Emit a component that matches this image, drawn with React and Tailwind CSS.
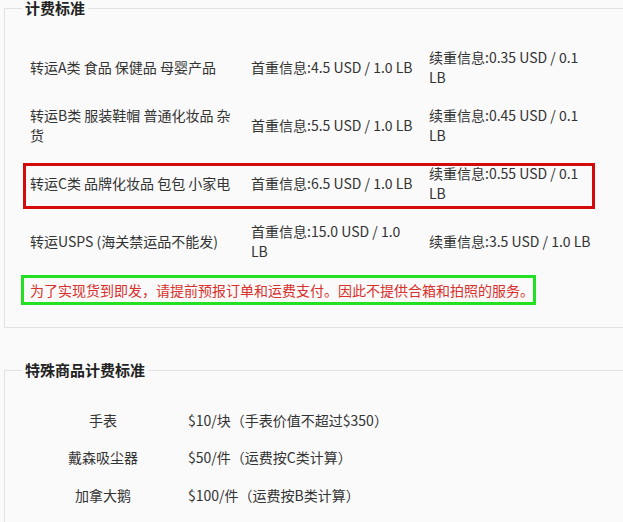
import React from "react";

const rows = [
  { name: "转运A类 食品 保健品 母婴产品", first: "首重信息:4.5 USD / 1.0 LB", next: "续重信息:0.35 USD / 0.1 LB" },
  { name: "转运B类 服装鞋帽 普通化妆品 杂货", first: "首重信息:5.5 USD / 1.0 LB", next: "续重信息:0.45 USD / 0.1 LB" },
  { name: "转运C类 品牌化妆品 包包 小家电", first: "首重信息:6.5 USD / 1.0 LB", next: "续重信息:0.55 USD / 0.1 LB", highlight: true },
  { name: "转运USPS (海关禁运品不能发)", first: "首重信息:15.0 USD / 1.0 LB", next: "续重信息:3.5 USD / 1.0 LB" },
];

const special = [
  { name: "手表", price: "$10/块（手表价值不超过$350）" },
  { name: "戴森吸尘器", price: "$50/件（运费按C类计算）" },
  { name: "加拿大鹅", price: "$100/件（运费按B类计算）" },
];

function Cells({ r }) {
  return (
    <>
      <div className="w-[221px] pr-[13px] shrink-0">{r.name}</div>
      <div className="w-[178px] pr-[10px] shrink-0">{r.first}</div>
      <div className="w-[168px] shrink-0">{r.next}</div>
    </>
  );
}

export default function App() {
  return (
    <div className="min-h-[522px] w-[623px] overflow-hidden bg-[#fafafa] text-[14px] leading-[20px] text-[#333] font-['Noto_Sans_CJK_SC',sans-serif]">
      <fieldset className="ml-[4px] border border-r-0 border-[#e2e2e2] pb-[22px]">
        <legend className="ml-[17px] px-[3px] text-[15px] leading-[16px] font-bold text-[#222]">计费标准</legend>
        <div className="pt-[22px] pl-[18px]">
          {rows.map((r) =>
            r.highlight ? (
              <div key={r.name} className="h-[58px] pt-[9px]">
                <div className="flex h-[46px] w-[572px] items-center border-[3px] border-[#d40b0b] pb-[6px] pl-[4px]">
                  <Cells r={r} />
                </div>
              </div>
            ) : (
              <div key={r.name} className="flex h-[58px] items-center pl-[7px]">
                <Cells r={r} />
              </div>
            )
          )}
          <div className="-ml-[2px] mt-[5px] flex h-[30px] w-[515px] items-center whitespace-nowrap border-[3px] border-[#22e022] pl-[6px] text-[#d9302c]">
            为了实现货到即发，请提前预报订单和运费支付。因此不提供合箱和拍照的服务。
          </div>
        </div>
      </fieldset>

      <fieldset className="ml-[4px] mt-[34px] border border-r-0 border-[#e2e2e2] pb-[20px]">
        <legend className="ml-[17px] px-[3px] text-[15px] leading-[16px] font-bold text-[#222]">特殊商品计费标准</legend>
        <div className="pt-[23px]">
          {special.map((s) => (
            <div key={s.name} className="flex h-[37.5px] items-center">
              <div className="w-[183px] shrink-0 pl-[13px] text-center">{s.name}</div>
              <div>{s.price}</div>
            </div>
          ))}
        </div>
      </fieldset>
    </div>
  );
}
